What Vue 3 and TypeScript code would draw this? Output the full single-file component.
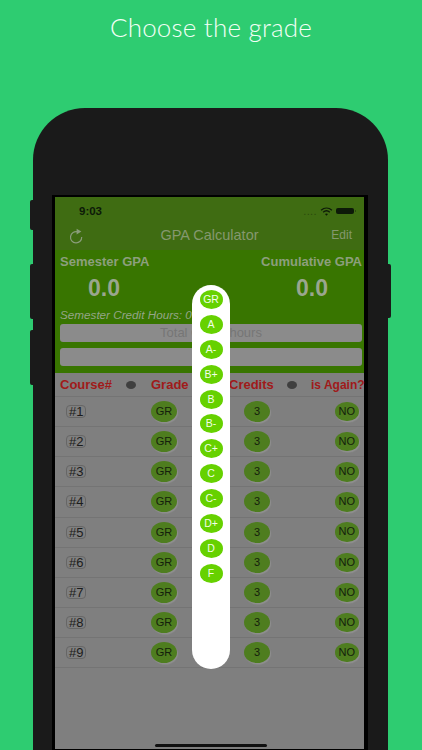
<script setup lang="ts">
const grades: string[] = ['GR', 'A', 'A-', 'B+', 'B', 'B-', 'C+', 'C', 'C-', 'D+', 'D', 'F']
const rows: number[] = [1, 2, 3, 4, 5, 6, 7, 8, 9]
</script>

<template>
  <div class="page">
    <h1 class="title">Choose the grade</h1>
    <div class="phone">
      <span class="side side-l1"></span>
      <span class="side side-l2"></span>
      <span class="side side-l3"></span>
      <span class="side side-r"></span>
      <div class="bezel">
        <div class="screen">
          <div class="topbar">
            <div class="status">
              <span class="time">9:03</span>
              <span class="status-icons">
                <span class="dots">....</span>
                <svg class="wifi" viewBox="0 0 14 10" width="13" height="9">
                  <path d="M1 3.6C4.6.4 9.4.4 13 3.6" fill="none" stroke="#0d1a08" stroke-width="1.5" />
                  <path d="M3.3 5.8c2.2-1.9 5.2-1.9 7.4 0" fill="none" stroke="#0d1a08" stroke-width="1.5" />
                  <path d="M5.3 7.8c1-.8 2.4-.8 3.4 0L7 9.6z" fill="#0d1a08" />
                </svg>
                <span class="battery"></span>
              </span>
            </div>
            <div class="nav">
              <svg class="refresh" viewBox="0 0 16 16" width="16" height="16">
                <path d="M9.6 3.9A5.6 5.6 0 1 0 13.7 9" fill="none" stroke="#8a9c7a" stroke-width="1.2" />
                <path d="M8.6 0.8 13.4 3.6 8.6 6.4z" fill="#8a9c7a" />
              </svg>
              <span class="nav-title">GPA Calculator</span>
              <span class="edit">Edit</span>
            </div>
          </div>

          <div class="summary">
            <div class="labels">
              <span>Semester GPA</span>
              <span>Cumulative GPA</span>
            </div>
            <div class="values">
              <span>0.0</span>
              <span>0.0</span>
            </div>
            <div class="hours">Semester Credit Hours: 0</div>
            <div class="box">Total Credit hours</div>
            <div class="box"></div>
          </div>

          <div class="table">
            <div class="thead">
              <span>Course#</span>
              <span class="dot"></span>
              <span>Grade</span>
              <span>Credits</span>
              <span class="dot"></span>
              <span class="th-again">is Again?</span>
            </div>
            <div v-for="n in rows" :key="n" class="row">
              <span class="tag">#{{ n }}</span>
              <span class="pill">GR</span>
              <span class="pill">3</span>
              <span class="pill pill-again">NO</span>
            </div>
          </div>

          <div class="home"></div>

          <div class="picker">
            <span v-for="g in grades" :key="g" class="option">{{ g }}</span>
          </div>
        </div>
      </div>
    </div>
  </div>
</template>

<style scoped>
.page {
  width: 422px;
  height: 750px;
  background: #2ecc71;
  overflow: hidden;
  font-family: "Liberation Sans", Arial, sans-serif;
}
.title {
  margin: 0;
  padding-top: 11px;
  height: 108px;
  box-sizing: border-box;
  text-align: center;
  color: #f2fff6;
  font-family: Lato, "Open Sans", sans-serif;
  font-weight: 300;
  font-size: 26px;
  line-height: 32px;
  letter-spacing: 0.2px;
}
.phone {
  position: relative;
  margin-left: 33px;
  width: 355px;
  height: 642px;
  background: #1a1a1a;
  border-radius: 52px 52px 0 0;
  padding: 87px 20px 0 19px;
  box-sizing: border-box;
}
.side {
  position: absolute;
  background: #1a1a1a;
  width: 3px;
}
.side-l1 { left: -3px; top: 92px; height: 30px; border-radius: 2px 0 0 2px; }
.side-l2 { left: -3px; top: 156px; height: 55px; border-radius: 2px 0 0 2px; }
.side-l3 { left: -3px; top: 222px; height: 55px; border-radius: 2px 0 0 2px; }
.side-r { right: -3px; top: 156px; height: 54px; border-radius: 0 2px 2px 0; }
.bezel {
  background: #000;
  padding: 2px 4px 0 3px;
  height: 555px;
  box-sizing: border-box;
}
.screen {
  position: relative;
  height: 552px;
  background: #7f7f7f;
  display: flex;
  flex-direction: column;
}
.topbar {
  background: #3f6c12;
  height: 53px;
  flex: none;
}
.status {
  height: 22px;
  display: flex;
  align-items: center;
  justify-content: space-between;
  padding: 6px 10px 0 24px;
  box-sizing: border-box;
}
.time {
  font-size: 11.5px;
  font-weight: 700;
  color: #0d1a08;
}
.status-icons {
  display: flex;
  align-items: center;
  gap: 3px;
}
.dots {
  font-size: 11px;
  line-height: 9px;
  color: #2a4a0c;
  letter-spacing: 0.4px;
}
.battery {
  position: relative;
  width: 18px;
  height: 6px;
  background: #0d1a08;
  border-radius: 2px;
}
.battery::after {
  content: "";
  position: absolute;
  right: -2px;
  top: 2px;
  width: 1px;
  height: 2px;
  background: #2c4a10;
}
.nav {
  position: relative;
  height: 31px;
  display: flex;
  align-items: center;
  justify-content: space-between;
  padding: 0 12px 0 13px;
}
.refresh {
  margin-top: 2px;
}
.nav-title {
  position: absolute;
  left: 0;
  right: 0;
  text-align: center;
  font-size: 14.5px;
  color: #85986f;
}
.edit {
  font-size: 12px;
  color: #85986f;
}
.summary {
  background: #387500;
  height: 123px;
  flex: none;
  padding: 5px 2px 0 5px;
  box-sizing: border-box;
}
.labels {
  display: flex;
  justify-content: space-between;
  font-size: 13px;
  font-weight: 700;
  line-height: 14px;
  color: #8c9f7d;
}
.values {
  display: grid;
  grid-template-columns: 88px 1fr;
  margin-top: 6px;
  font-size: 23px;
  font-weight: 700;
  line-height: 26px;
  color: #9aa68e;
}
.values span:first-child {
  text-align: center;
}
.values span:last-child {
  text-align: right;
  padding-right: 34px;
}
.hours {
  margin-top: 7px;
  font-size: 11.7px;
  font-style: italic;
  line-height: 13px;
  color: #94a587;
}
.box {
  margin-top: 6px;
  height: 18px;
  background: #8b8b8b;
  border-radius: 3px;
  text-align: center;
  font-size: 13px;
  line-height: 18px;
  color: #767676;
}
.hours + .box {
  margin-top: 3px;
}
.thead {
  height: 23px;
  display: grid;
  grid-template-columns: 66px 25px 78px 58px 24px 1fr;
  align-items: center;
  padding-left: 5px;
  font-size: 13px;
  font-weight: 700;
  color: #a01a1a;
  white-space: nowrap;
}
.th-again {
  font-size: 12px;
}
.dot {
  width: 10px;
  height: 8px;
  background: #3f3f3f;
  border-radius: 50%;
}
.row {
  height: 30.15px;
  box-sizing: border-box;
  border-top: 1px solid #747474;
  display: grid;
  grid-template-columns: 85px 93px 91px 1fr;
  align-items: center;
  padding-left: 11px;
}
.row:last-child {
  border-bottom: 1px solid #747474;
  height: 31px;
}
.tag {
  justify-self: start;
  padding: 0 2px;
  border: 1px solid #666;
  border-radius: 4px;
  font-size: 13px;
  line-height: 11px;
  color: #1c1c1c;
}
.pill {
  justify-self: start;
  display: block;
  width: 26px;
  height: 21px;
  line-height: 21px;
  background: #4e7d1f;
  border-radius: 50%;
  box-shadow: 1px 1.5px 1px rgba(150, 150, 150, 0.7);
  text-align: center;
  color: #14200c;
  font-size: 11px;
}
.pill-again {
  width: 23.5px;
  height: 19.5px;
  line-height: 19.5px;
}
.home {
  position: absolute;
  left: 100px;
  bottom: 2px;
  width: 112px;
  height: 3px;
  background: #111;
  border-radius: 2px;
}
.picker {
  position: absolute;
  left: 137px;
  top: 88px;
  width: 38px;
  height: 384px;
  background: #fff;
  border-radius: 19px;
  display: flex;
  flex-direction: column;
  align-items: center;
  gap: 5.9px;
  padding-top: 5px;
  box-sizing: border-box;
}
.option {
  flex: none;
  width: 23px;
  height: 19px;
  line-height: 19px;
  background: #66d100;
  border-radius: 50%;
  text-align: center;
  color: #f2ffe8;
  font-size: 10.5px;
}
</style>

<style>
html, body { margin: 0; background: #2ecc71; }
</style>
